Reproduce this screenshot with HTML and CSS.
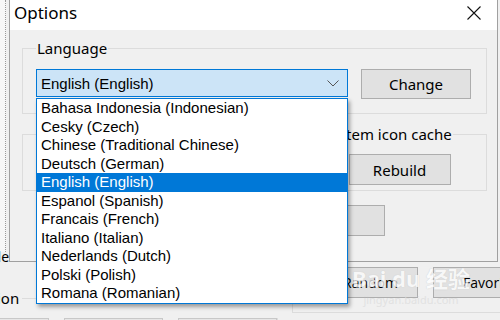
FILE: index.html
```html
<!DOCTYPE html>
<html lang="en">
<head>
    <meta charset="UTF-8">
    <title>Options</title>
    <link rel="stylesheet" href="styles.css">
</head>
<body>
    <div class="desktop">

        <!-- main app window behind the dialog -->
        <div class="app">
            <div class="app-top">
                <div class="ruler"></div>
                <div class="app-label">Select</div>
            </div>
            <div class="app-bottom">
                <div class="app-left">
                    <div class="option-head">
                        <span class="option-title">ion</span>
                        <span class="option-line"></span>
                    </div>
                    <div class="tabs">
                        <span class="tab tab-a"></span>
                        <span class="tab tab-b"></span>
                        <span class="tab tab-c"></span>
                    </div>
                </div>
                <div class="app-right">
                    <button class="app-btn random">Random</button>
                    <button class="app-btn favo">Favorites</button>
                </div>
            </div>
        </div>

        <!-- Options dialog -->
        <div class="dialog">
            <div class="titlebar">
                <span class="title">Options</span>
                <svg class="close" width="16" height="16" viewBox="0 0 16 16">
                    <path d="M1.5 1.5 L14.5 14.5 M14.5 1.5 L1.5 14.5" stroke="#111" stroke-width="1.1" fill="none"/>
                </svg>
            </div>
            <div class="dialog-body">
                <fieldset class="group lang-group">
                    <legend>Language</legend>
                    <div class="lang-row">
                        <div class="combo">
                            <span>English (English)</span>
                            <svg class="chevron" width="12" height="7" viewBox="0 0 12 7">
                                <path d="M0.5 0.5 L6 6 L11.5 0.5" stroke="#555" stroke-width="1" fill="none"/>
                            </svg>
                        </div>
                        <button class="btn change">Change</button>
                    </div>
                </fieldset>

                <div class="cache-row">
                    <fieldset class="group thumb-group">
                        <legend>Thumbnail cache</legend>
                    </fieldset>
                    <fieldset class="group icon-group">
                        <legend>System icon cache</legend>
                        <button class="btn rebuild">Rebuild</button>
                    </fieldset>
                </div>

                <div class="footer">
                    <button class="btn ok">OK</button>
                    <button class="btn cancel">Cancel</button>
                </div>
            </div>
        </div>

        <!-- open dropdown list of the language combo -->
        <ul class="dropdown">
            <li>Bahasa Indonesia (Indonesian)</li>
            <li>Cesky (Czech)</li>
            <li>Chinese (Traditional Chinese)</li>
            <li>Deutsch (German)</li>
            <li class="selected">English (English)</li>
            <li>Espanol (Spanish)</li>
            <li>Francais (French)</li>
            <li>Italiano (Italian)</li>
            <li>Nederlands (Dutch)</li>
            <li>Polski (Polish)</li>
            <li>Romana (Romanian)</li>
        </ul>

        <div class="watermark">
            <span class="wm-big">Bai du 经验</span>
            <span class="wm-small">jingyan.baidu.com</span>
        </div>
    </div>
</body>
</html>
```

FILE: styles.css
```css
body {
    margin: 0;
    background-color: #f0f0f0;
}

.desktop {
    position: relative;
    width: 500px;
    height: 320px;
    overflow: hidden;
    background-color: #f0f0f0;
    font-family: 'Noto Sans', 'Open Sans', sans-serif;
    font-size: 14px;
    color: #000;
}

/* ---- app window behind ---- */
.app {
    display: flex;
    flex-direction: column;
    height: 100%;
}

.app-top {
    height: 262px;
    display: flex;
    flex-direction: column;
}

.ruler {
    width: 5px;
    height: 252px;
    background-color: #f7f7f7;
    border-right: 1px dotted #9a9a9a;
}

.app-label {
    margin-left: -18px;
    line-height: 10px;
    font-size: 14px;
}

.app-bottom {
    flex: 1;
    display: flex;
}

.app-left {
    width: 287px;
    display: flex;
    flex-direction: column;
}

.option-head {
    display: flex;
    align-items: center;
    margin-top: 26px;
    height: 20px;
}

.option-title {
    font-size: 15px;
    margin-left: -3px;
}

.option-line {
    flex: 1;
    margin-left: 3px;
    border-top: 1px solid #dcdcdc;
}

.tabs {
    display: flex;
    gap: 15px;
    margin-top: 10px;
    border-right: 1px solid #dcdcdc;
}

.tab {
    height: 10px;
    border: 1px solid #c8c8c8;
    background-color: #e6e6e6;
}
.tab-a { width: 48px; margin-left: -1px; }
.tab-b { width: 97px; }
.tab-c { width: 97px; }

.app-right {
    flex: 1;
    display: flex;
    align-items: flex-start;
    gap: 15px;
    margin-left: 14px;
    padding: 5px 0 0 30px;
    height: 45px;
    border-left: 1px solid #dcdcdc;
    border-bottom: 1px solid #dcdcdc;
}

.app-btn {
    flex-shrink: 0;
    height: 31px;
    border: 1px solid #adadad;
    background-color: #e1e1e1;
    font-family: 'Open Sans', sans-serif;
    font-size: 14px;
    padding: 0;
    color: #000;
}
.random { width: 95px; }
.favo {
    width: 130px;
    text-align: left;
    padding-left: 29px;
}

/* ---- dialog ---- */
.dialog {
    position: absolute;
    left: 9px;
    top: 0;
    width: 489px;
    height: 262px;
    box-sizing: border-box;
    border: 1px solid #a0a0a0;
    border-top: none;
    background-color: #f0f0f0;
    display: flex;
    flex-direction: column;
}

.titlebar {
    height: 30px;
    background-color: #fff;
    display: flex;
    align-items: center;
    justify-content: space-between;
    padding: 0 15px 0 4px;
}

.title {
    font-size: 17px;
    margin-top: -5px;
}

.close {
    margin-top: -5px;
}

.dialog-body {
    padding: 9px 10px 0 12px;
}

.group {
    margin: 0;
    border: 1px solid #dcdcdc;
    padding: 0 15px 14px 13px;
}

.group legend {
    padding: 0 1px;
    font-size: 15px;
    line-height: 18px;
}

.lang-row {
    display: flex;
    gap: 13px;
    margin-top: 12px;
}

.combo {
    width: 312px;
    height: 28px;
    box-sizing: border-box;
    border: 1px solid #0078d7;
    background-color: #cce4f7;
    display: flex;
    align-items: center;
    justify-content: space-between;
    padding: 0 8px 0 4px;
    font-family: 'Liberation Sans', Arial, sans-serif;
    font-size: 15px;
}

.btn {
    border: 1px solid #adadad;
    background-color: #e1e1e1;
    font-family: 'Noto Sans', sans-serif;
    font-size: 15px;
    padding: 0;
    color: #000;
}

.change {
    width: 110px;
    height: 30px;
}

.cache-row {
    display: flex;
    gap: 10px;
    margin-top: 11px;
}

.thumb-group {
    width: 276px;
    height: 66px;
    box-sizing: border-box;
}

.icon-group {
    flex: 1;
    display: flex;
    justify-content: center;
    height: 66px;
    box-sizing: border-box;
    padding: 11px 0 0 0;
}

.icon-group legend {
    margin-left: 13px;
}

.rebuild {
    width: 102px;
    height: 31px;
    margin-left: 4px;
}

.footer {
    display: flex;
    justify-content: flex-end;
    gap: 12px;
    margin-top: 14px;
    padding-right: 102px;
}

.ok {
    width: 84px;
    height: 31px;
}

.cancel {
    width: 150px;
    height: 31px;
}

/* ---- dropdown list ---- */
.dropdown {
    position: absolute;
    left: 36px;
    top: 98px;
    width: 312px;
    height: 206px;
    box-sizing: border-box;
    margin: 0;
    padding: 0;
    list-style: none;
    background-color: #fff;
    border: 1px solid #0078d7;
    box-shadow: 2px 3px 4px rgba(0, 0, 0, 0.35);
    font-family: 'Liberation Sans', Arial, sans-serif;
    font-size: 15px;
}

.dropdown li {
    height: 18.5px;
    line-height: 18.5px;
    padding-left: 4px;
    white-space: nowrap;
}

.dropdown .selected {
    background-color: #0078d7;
    color: #fff;
}

/* ---- baidu watermark ---- */
.watermark {
    position: absolute;
    left: 352px;
    top: 262px;
    display: flex;
    flex-direction: column;
    align-items: center;
    color: #fff;
    opacity: 0.75;
    pointer-events: none;
}

.wm-big {
    font-family: 'Noto Sans', 'Noto Sans CJK SC', sans-serif;
    font-size: 22px;
    font-weight: bold;
    line-height: 32px;
    text-shadow: 0 0 1px #bbb;
}

.wm-small {
    font-size: 11px;
    line-height: 12px;
    color: #ddd;
}
```
